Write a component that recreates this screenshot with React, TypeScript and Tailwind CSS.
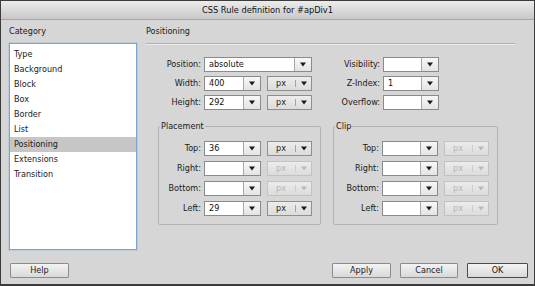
const font = "font-['DejaVu_Sans_Condensed','DejaVu_Sans',sans-serif]";

function Tri({ off }: { off?: boolean }) {
  return (
    <svg width="6" height="5" viewBox="0 0 6 5">
      <path d="M0 0.5h6L3 4.5z" fill={off ? '#b9b9b9' : '#1a1a1a'} />
    </svg>
  );
}

function Combo({ value, w }: { value?: string; w: string }) {
  return (
    <div className={`flex h-[15px] border border-[#8a8a8a] bg-white ${w}`}>
      <div className="flex-1 pl-[4px] text-[9px] leading-[13px] text-[#111]">{value}</div>
      <div className="flex w-[17px] items-center justify-center border-l border-[#a8a8a8] bg-gradient-to-b from-[#f7f7f7] to-[#e4e4e4]">
        <Tri />
      </div>
    </div>
  );
}

function Units({ off }: { off?: boolean }) {
  return (
    <div
      className={`flex h-[15px] w-[45px] border bg-gradient-to-b from-[#ececec] to-[#dcdcdc] ${
        off ? 'border-[#c2c2c2] text-[#b5b5b5]' : 'border-[#8f8f8f] text-[#1a1a1a]'
      }`}
    >
      <div className="flex-1 pl-[8px] text-[9px] leading-[13px]">px</div>
      <div className={`my-[3px] border-l ${off ? 'border-[#cdcdcd]' : 'border-[#a5a5a5]'}`} />
      <div className="flex w-[15px] items-center justify-center">
        <Tri off={off} />
      </div>
    </div>
  );
}

function Row({ label, lw, children }: { label: string; lw: string; children: React.ReactNode }) {
  return (
    <div className="flex h-[15px] items-center">
      <div className={`text-right text-[9px] text-[#1a1a1a] ${lw}`}>{label}</div>
      <div className="ml-[3px] flex gap-[6px]">{children}</div>
    </div>
  );
}

function Group({ title, w, children }: { title: string; w: string; children: React.ReactNode }) {
  return (
    <fieldset className={`rounded-[2px] border border-[#b3b3b3] pb-[8px] ${w}`}>
      <legend className="ml-[1px] px-[1px] text-[9px] leading-[12px] text-[#1a1a1a]">{title}</legend>
      <div className="flex flex-col gap-[5px] pt-[9px]">{children}</div>
    </fieldset>
  );
}

function Btn({ label, def, w }: { label: string; def?: boolean; w: string }) {
  return (
    <button
      className={`h-[15px] rounded-[1px] bg-gradient-to-b from-[#f3f3f3] to-[#d9d9d9] text-[9px] leading-[13px] text-[#1a1a1a] ${w} ${
        def ? 'border-[1.5px] border-[#4a4a4a]' : 'border border-[#8c8c8c]'
      }`}
    >
      {label}
    </button>
  );
}

export default function App() {
  const cats = ['Type', 'Background', 'Block', 'Box', 'Border', 'List', 'Positioning', 'Extensions', 'Transition'];

  return (
    <div className={`flex h-[286px] w-[535px] flex-col border-x border-t border-b-2 border-[#3c3c3c] bg-[#d6d6d6] ${font}`}>
      <div className="flex h-[19px] items-center justify-center border-b border-[#a6a6a6] bg-gradient-to-b from-[#ececec] to-[#c8c8c8] text-[9.2px] text-[#111]">
        CSS Rule definition for #apDiv1
      </div>

      <div className="flex h-[231px]">
        <div className="ml-[8px] w-[128px] pt-[5px]">
          <div className="h-[12px] text-[9px] leading-[12px] text-[#1a1a1a]">Category</div>
          <div className="mt-[6px] h-[207px] border border-[#7ba6cf] bg-white pt-[3px] shadow-[0_0_0_1px_rgba(140,180,220,0.35)]">
            {cats.map((c) => (
              <div
                key={c}
                className={`h-[15px] pl-[4px] text-[9px] leading-[15px] text-[#1a1a1a] ${
                  c === 'Positioning' ? 'bg-[#c6c6c6]' : ''
                }`}
              >
                {c}
              </div>
            ))}
          </div>
        </div>

        <div className="ml-[9px] w-[369px] pt-[5px]">
          <div className="h-[12px] text-[9px] leading-[12px] text-[#1a1a1a]">Positioning</div>
          <div className="mt-[6px] border-t border-b border-t-[#b0b0b0] border-b-[#ececec]" />

          <div className="mt-[12px] flex gap-[12px] pl-[12px]">
            <div className="flex w-[163px] flex-col">
              <div className="flex flex-col gap-[4px]">
                <Row label="Position:" lw="w-[43px]">
                  <Combo value="absolute" w="w-[108px]" />
                </Row>
                <Row label="Width:" lw="w-[43px]">
                  <Combo value="400" w="w-[57px]" />
                  <Units />
                </Row>
                <Row label="Height:" lw="w-[43px]">
                  <Combo value="292" w="w-[57px]" />
                  <Units />
                </Row>
              </div>
              <div className="mt-[10px]">
                <Group title="Placement" w="w-[163px]">
                  <Row label="Top:" lw="w-[42px]">
                    <Combo value="36" w="w-[57px]" />
                    <Units />
                  </Row>
                  <Row label="Right:" lw="w-[42px]">
                    <Combo w="w-[57px]" />
                    <Units off />
                  </Row>
                  <Row label="Bottom:" lw="w-[42px]">
                    <Combo w="w-[57px]" />
                    <Units off />
                  </Row>
                  <Row label="Left:" lw="w-[42px]">
                    <Combo value="29" w="w-[57px]" />
                    <Units />
                  </Row>
                </Group>
              </div>
            </div>

            <div className="flex w-[165px] flex-col">
              <div className="flex flex-col gap-[4px]">
                <Row label="Visibility:" lw="w-[47px]">
                  <Combo w="w-[56px]" />
                </Row>
                <Row label="Z-Index:" lw="w-[47px]">
                  <Combo value="1" w="w-[56px]" />
                </Row>
                <Row label="Overflow:" lw="w-[47px]">
                  <Combo w="w-[56px]" />
                </Row>
              </div>
              <div className="mt-[10px]">
                <Group title="Clip" w="w-[165px]">
                  <Row label="Top:" lw="w-[45px]">
                    <Combo w="w-[56px]" />
                    <Units off />
                  </Row>
                  <Row label="Right:" lw="w-[45px]">
                    <Combo w="w-[56px]" />
                    <Units off />
                  </Row>
                  <Row label="Bottom:" lw="w-[45px]">
                    <Combo w="w-[56px]" />
                    <Units off />
                  </Row>
                  <Row label="Left:" lw="w-[45px]">
                    <Combo w="w-[56px]" />
                    <Units off />
                  </Row>
                </Group>
              </div>
            </div>
          </div>
        </div>
      </div>

      <div className="mt-[12px] flex items-center pl-[9px] pr-[6px]">
        <Btn label="Help" w="w-[59px]" />
        <div className="flex-1" />
        <div className="flex gap-[9px]">
          <Btn label="Apply" w="w-[59px]" />
          <Btn label="Cancel" w="w-[58px]" />
          <Btn label="OK" def w="w-[61px]" />
        </div>
      </div>
    </div>
  );
}
